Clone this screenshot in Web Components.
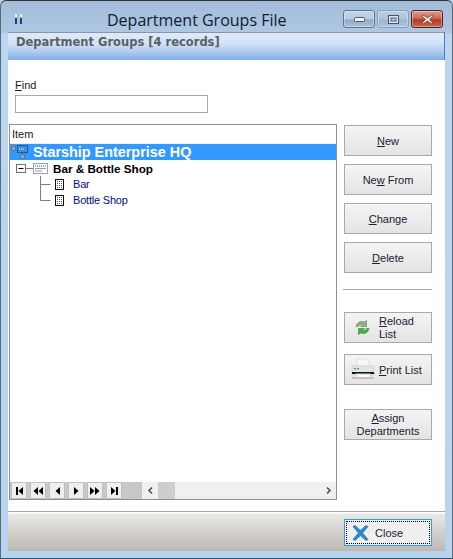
<!DOCTYPE html>
<html>
<head>
<meta charset="utf-8">
<title>Department Groups File</title>
<style>
    html, body { margin: 0; padding: 0; background: #b9d4ee; }
    body { font-family: "DejaVu Sans", sans-serif; font-size: 10px; }
    u { text-underline-offset: 1px; }
</style>
</head>
<body>

<app-window>
    <title-bar slot="title" label="Department Groups File"></title-bar>
    <band-header slot="band">Department Groups [4 records]</band-header>

    <find-box slot="left"></find-box>
    <tree-list slot="left">
        <tree-row kind="root" selected label="Starship Enterprise HQ"></tree-row>
        <tree-row kind="group" label="Bar &amp; Bottle Shop"></tree-row>
        <tree-row kind="leaf" label="Bar"></tree-row>
        <tree-row kind="leaf-last" label="Bottle Shop"></tree-row>
    </tree-list>

    <side-buttons slot="right"></side-buttons>

    <foot-bar slot="foot"></foot-bar>
</app-window>

<script>
class AppWindow extends HTMLElement {
    constructor() {
        super();
        this.attachShadow({ mode: 'open' });
        this.shadowRoot.innerHTML = `
            <style>
                :host {
                    display: flex;
                    flex-direction: column;
                    width: 453px;
                    height: 559px;
                    box-sizing: border-box;
                    overflow: hidden;
                    border: 1px solid #5a6a78;
                    border-top-color: #2c3238;
                    border-bottom-color: #1f5a6c;
                    border-radius: 6px 6px 0 0;
                    background: linear-gradient(180deg, #a3bcd8 0, #aec7e2 32px, #bad6f0 33px, #b7d3ee 100%);
                }
                .client {
                    flex: 1;
                    display: flex;
                    flex-direction: column;
                    margin: 0 7px 7px 7px;
                    background: #fff;
                    min-height: 0;
                }
                .main {
                    flex: 1;
                    display: flex;
                    min-height: 0;
                    padding: 0 13px 11px 1px;
                    gap: 7px;
                }
                .left { flex: 0 0 328px; display: flex; flex-direction: column; min-width: 0; }
                .right { flex: 0 0 88px; }
            </style>
            <slot name="title"></slot>
            <div class="client">
                <slot name="band"></slot>
                <div class="main">
                    <div class="left"><slot name="left"></slot></div>
                    <div class="right"><slot name="right"></slot></div>
                </div>
                <slot name="foot"></slot>
            </div>
        `;
    }
}
customElements.define('app-window', AppWindow);

class TitleBar extends HTMLElement {
    constructor() {
        super();
        this.attachShadow({ mode: 'open' });
    }
    connectedCallback() {
        const label = this.getAttribute('label');
        this.shadowRoot.innerHTML = `
            <style>
                :host {
                    display: flex;
                    align-items: flex-start;
                    height: 31px;
                    flex: none;
                    font-family: "Open Sans", sans-serif;
                    font-size: 16px;
                    color: #10202e;
                    position: relative;
                }
                .icon { margin: 12px 0 0 12px; width: 12px; height: 12px; }
                .text { position: absolute; left: 106px; top: 9px; line-height: 21px; white-space: nowrap; }
                .caps { margin: 9px 9px 0 auto; display: flex; gap: 2px; }
                .cap {
                    width: 30px; height: 16px;
                    border: 1px solid #5f7690;
                    border-radius: 3px;
                    display: flex; align-items: center; justify-content: center;
                    background: linear-gradient(180deg, #c3d5e8 0, #b6cbe1 50%, #8ea9c5 55%, #a9c2da 100%);
                    box-shadow: inset 0 0 0 1px rgba(255,255,255,.35);
                }
                .cap.max { border-color: #84a0bc; background: linear-gradient(180deg, #b9cde2 0, #adc5dc 50%, #9bb6d0 55%, #aac3db 100%); }
                .cap.close {
                    border-color: #5a2020;
                    background: linear-gradient(180deg, #d9a096 0, #cc6a58 45%, #b43a22 55%, #c8664c 100%);
                }
            </style>
            <svg class="icon" viewBox="0 0 12 12">
                <rect x="2" y="1" width="2" height="3" fill="#e8f0f8"/><rect x="7" y="1" width="2" height="3" fill="#e8f0f8"/>
                <rect x="2" y="5" width="2" height="6" fill="#1f3f80"/><rect x="7" y="5" width="2" height="6" fill="#1f3f80"/>
            </svg>
            <div class="text">${label}</div>
            <div class="caps">
                <div class="cap">
                    <svg width="11" height="5" viewBox="0 0 11 5"><rect x=".5" y=".5" width="10" height="4" rx="1" fill="#f0f3f6" stroke="#47566a"/></svg>
                </div>
                <div class="cap max">
                    <svg width="11" height="9" viewBox="0 0 11 9"><rect x=".5" y=".5" width="10" height="8" fill="none" stroke="#47566a"/><rect x="1.500" y="1.500" width="8" height="6" fill="none" stroke="#dfe8f0"/><rect x="3" y="3" width="5" height="3" fill="#a8c0d8" stroke="#47566a" stroke-width=".6"/></svg>
                </div>
                <div class="cap close">
                    <svg width="13" height="11" viewBox="0 0 13 11"><path d="M2 1 L6.5 4 L11 1 L12 2 L8.5 5.5 L12 9 L11 10 L6.5 7 L2 10 L1 9 L4.5 5.5 L1 2 Z" fill="#f4f4f4" stroke="#6a3028" stroke-width=".7"/></svg>
                </div>
            </div>
        `;
    }
}
customElements.define('title-bar', TitleBar);

class BandHeader extends HTMLElement {
    constructor() {
        super();
        this.attachShadow({ mode: 'open' });
        this.shadowRoot.innerHTML = `
            <style>
                :host {
                    display: block;
                    flex: none;
                    height: 28px;
                    box-sizing: border-box;
                    border-top: 1px solid #8c949c;
                    border-right: 1px solid #4a78c8;
                    background: linear-gradient(180deg, #dde9fb 0, #d4e4f9 35%, #b5cff0 65%, #84ade4 100%);
                    font-family: "DejaVu Sans", sans-serif;
                    font-weight: bold;
                    font-size: 11.5px;
                    color: #5a5f60;
                    padding: 2px 0 0 8px;
                    line-height: 15px;
                    white-space: nowrap;
                }
            </style>
            <slot></slot>
        `;
    }
}
customElements.define('band-header', BandHeader);

class FindBox extends HTMLElement {
    constructor() {
        super();
        this.attachShadow({ mode: 'open' });
        this.shadowRoot.innerHTML = `
            <style>
                :host {
                    display: block;
                    flex: none;
                    height: 36px;
                    margin-top: 18px;
                    padding-left: 6px;
                    font-family: "Liberation Sans", sans-serif;
                    font-size: 11px;
                    color: #1a1a1a;
                }
                label { display: block; line-height: 14px; height: 14px; }
                .input {
                    width: 193px;
                    height: 18px;
                    margin-top: 3px;
                    box-sizing: border-box;
                    border: 1px solid #a9a9a9;
                    background: #fff;
                }
            </style>
            <label><u>F</u>ind</label>
            <div class="input"></div>
        `;
    }
}
customElements.define('find-box', FindBox);

class TreeList extends HTMLElement {
    constructor() {
        super();
        this.attachShadow({ mode: 'open' });
        this.shadowRoot.innerHTML = `
            <style>
                :host {
                    display: flex;
                    flex-direction: column;
                    flex: 1;
                    min-height: 0;
                    margin-top: 10px;
                    box-sizing: border-box;
                    border: 1px solid #8f8f8f;
                    font-family: "Liberation Sans", sans-serif;
                    font-size: 11px;
                }
                .head {
                    flex: none;
                    height: 19px;
                    line-height: 19px;
                    padding-left: 2px;
                    color: #1a1a1a;
                    box-sizing: border-box;
                    border-bottom: 1px solid #eceff3;
                }
                .rows { flex: 1; min-height: 0; }
                .bottom {
                    flex: none;
                    display: flex;
                    height: 17px;
                    background: #f0f0f0;
                }
                .nav {
                    display: flex;
                    gap: 3px;
                    width: 132px;
                    box-sizing: border-box;
                    padding-left: 1px;
                    background: #c8c8c8;
                }
                .nav div {
                    width: 16px;
                    background: #efefef;
                    box-sizing: border-box;
                    border: 1px solid #c0c0c0;
                    display: flex; align-items: center; justify-content: center;
                }
                .arrow { width: 16px; display: flex; align-items: center; justify-content: center; }
                .thumb { width: 17px; background: #cdcdcd; }
                .track { flex: 1; }
            </style>
            <div class="head">Item</div>
            <div class="rows"><slot></slot></div>
            <div class="bottom">
                <div class="nav">
                    <div><svg width="9" height="8" viewBox="0 0 9 8"><path d="M1 0h2v8H1zM8 0v8L3.500 4z" fill="#000"/></svg></div>
                    <div><svg width="10" height="8" viewBox="0 0 10 8"><path d="M5 0v8L.5 4zM10 0v8L5.500 4z" fill="#000"/></svg></div>
                    <div><svg width="5" height="8" viewBox="0 0 5 8"><path d="M5 0v8L.5 4z" fill="#000"/></svg></div>
                    <div><svg width="5" height="8" viewBox="0 0 5 8"><path d="M0 0v8l4.500-4z" fill="#000"/></svg></div>
                    <div><svg width="10" height="8" viewBox="0 0 10 8"><path d="M0 0v8l4.500-4zM5 0v8l4.500-4z" fill="#000"/></svg></div>
                    <div><svg width="9" height="8" viewBox="0 0 9 8"><path d="M1 0v8l4.500-4zM6 0h2v8H6z" fill="#000"/></svg></div>
                </div>
                <div class="arrow"><svg width="7" height="7" viewBox="0 0 7 7"><path d="M5 .5 2 3.5l3 3" fill="none" stroke="#505050" stroke-width="1.6"/></svg></div>
                <div class="thumb"></div>
                <div class="track"></div>
                <div class="arrow"><svg width="7" height="7" viewBox="0 0 7 7"><path d="M2 .5l3 3-3 3" fill="none" stroke="#505050" stroke-width="1.6"/></svg></div>
            </div>
        `;
    }
}
customElements.define('tree-list', TreeList);

const LEAF_ICON = `
    <rect x="45.500" y="3.500" width="8" height="10" fill="#fff" stroke="#101010"/>
    <path d="M47 5.500h5M47 7.500h5M47 9.500h5M47 11.500h5" stroke="#505050" stroke-dasharray="1 1"/>`;

const TREE_GLYPHS = {
    root: `<svg width="23" height="16" viewBox="0 0 23 16">
            <rect x="1.500" y="2.500" width="4" height="4" fill="#8ca4b8" stroke="#5a7a94"/>
            <path d="M6 5h2M12.500 9v2" stroke="#5a7a94"/>
            <rect x="7.500" y="1.500" width="10" height="7" fill="#3a8fe0" stroke="#1a5aa0"/>
            <path d="M9 5h1M11 5h1M13 5h1" stroke="#fff"/>
            <rect x="10.500" y="10.500" width="4" height="4" fill="#8ca4b8" stroke="#5a7a94"/>
           </svg>`,
    group: `<svg width="43" height="16" viewBox="0 0 43 16">
            <rect x="6.500" y="4.500" width="9" height="8" fill="#fff" stroke="#707070"/>
            <path d="M8.500 8.500h5" stroke="#000"/>
            <path d="M16 8.500h7" stroke="#808080"/>
            <rect x="23.500" y="3.500" width="14" height="10" fill="#fff" stroke="#a0a0ac"/>
            <path d="M25 6h11" stroke="#3040a0" stroke-dasharray="1 1"/>
            <path d="M25 8.500h11M25 11h7" stroke="#9098c8"/>
           </svg>`,
    leaf: `<svg width="63" height="16" viewBox="0 0 63 16">
            <path d="M30.500 0v16M30.500 8.500h10" fill="none" stroke="#808080"/>
            ${LEAF_ICON}
           </svg>`,
    'leaf-last': `<svg width="63" height="16" viewBox="0 0 63 16">
            <path d="M30.500 0v8.500h10" fill="none" stroke="#808080"/>
            ${LEAF_ICON}
           </svg>`
};

class TreeRow extends HTMLElement {
    constructor() {
        super();
        this.attachShadow({ mode: 'open' });
    }
    connectedCallback() {
        const kind = this.getAttribute('kind');
        const label = this.getAttribute('label');
        const selected = this.hasAttribute('selected');
        const textStyle = {
            root: 'font:bold 14.4px "Liberation Sans",sans-serif;color:#fff;',
            group: 'font:bold 11.7px "Liberation Sans",sans-serif;color:#000;',
            leaf: 'color:#00107a;letter-spacing:-.2px;',
            'leaf-last': 'color:#00107a;letter-spacing:-.2px;'
        }[kind];
        this.shadowRoot.innerHTML = `
            <style>
                :host {
                    display: block;
                    height: 16px;
                    line-height: 16px;
                    white-space: nowrap;
                }
                .row { display: flex; align-items: center; height: 16px; background: ${selected ? '#3399ff' : 'transparent'}; }
                svg { flex: none; display: block; }
                .text { ${textStyle} }
            </style>
            <div class="row">${TREE_GLYPHS[kind]}<span class="text">${label}</span></div>
        `;
    }
}
customElements.define('tree-row', TreeRow);

class FlatButton extends HTMLElement {
    constructor() {
        super();
        this.attachShadow({ mode: 'open' });
        this.shadowRoot.innerHTML = `
            <style>
                :host {
                    display: flex;
                    align-items: center;
                    justify-content: center;
                    box-sizing: border-box;
                    width: 88px;
                    height: 31px;
                    padding-top: 1px;
                    border: 1px solid #a9a9a9;
                    background: linear-gradient(180deg, #f4f4f4 0, #ececec 50%, #e4e4e4 100%);
                    font-family: "Liberation Sans", sans-serif;
                    font-size: 11px;
                    line-height: 13px;
                    color: #1a2230;
                    text-align: center;
                }
                :host([iconed]) { justify-content: flex-start; text-align: left; padding-top: 0; }
                u { text-underline-offset: 1px; }
            </style>
            <slot></slot>
        `;
    }
}
customElements.define('flat-button', FlatButton);

class SideButtons extends HTMLElement {
    constructor() {
        super();
        this.attachShadow({ mode: 'open' });
        this.shadowRoot.innerHTML = `
            <style>
                :host { display: flex; flex-direction: column; padding-top: 65px; }
                .stack { display: flex; flex-direction: column; gap: 8px; }
                hr { border: 0; height: 1px; background: #a8a8a8; margin: 16px 0 22px -1px; width: 89px; }
                .lower { display: flex; flex-direction: column; gap: 11px; }
                .assign { margin-top: 24px; }
                .ico { flex: none; display: block; }
                .print { padding-top: 2px; }
            </style>
            <div class="stack">
                <flat-button><span><u>N</u>ew</span></flat-button>
                <flat-button><span>Ne<u>w</u> From</span></flat-button>
                <flat-button><span><u>C</u>hange</span></flat-button>
                <flat-button><span><u>D</u>elete</span></flat-button>
            </div>
            <hr>
            <div class="lower">
                <flat-button iconed>
                    <svg class="ico" style="margin-left:9px;margin-right:8px" width="17" height="17" viewBox="0 0 17 17">
                        <path d="M2 7.500C2.500 3.500 7 1.500 10.500 3L12.500 1.500V7.500H6.500L8.500 5.800C7 5 5 5.800 4.500 7.500Z" fill="#8fae8a" stroke="#5f8a5c" stroke-width=".6"/>
                        <path d="M15 9.500C14.500 13.500 10 15.500 6.500 14L4.500 15.500V9.500H10.500L8.500 11.200C10 12 12 11.200 12.500 9.500Z" fill="#47b04a" stroke="#2e8a30" stroke-width=".6"/>
                    </svg>
                    <span><u>R</u>eload<br>List</span>
                </flat-button>
                <flat-button iconed>
                    <svg class="ico" style="margin-left:6px;margin-right:4px" width="24" height="24" viewBox="0 0 24 24">
                        <rect x="6" y="1" width="12" height="8" fill="#f6f6f6" stroke="#e2e2e2"/>
                        <rect x="1" y="8" width="22" height="9" rx="1" fill="#e4e4e4" stroke="#d2d2d2"/>
                        <rect x="3" y="10" width="2" height="1.500" fill="#3fb04a"/><rect x="6" y="10" width="2" height="1.500" fill="#3fb04a"/>
                        <rect x="1" y="14" width="22" height="2" fill="#141414"/>
                        <rect x="5" y="16" width="14" height="4" fill="#fcfcfc" stroke="#d8d8d8"/>
                        <rect x="1" y="19" width="22" height="2" fill="#c2c2c2"/>
                    </svg>
                    <span class="print"><u>P</u>rint List</span>
                </flat-button>
            </div>
            <flat-button class="assign"><span><u>A</u>ssign<br>Departments</span></flat-button>
        `;
    }
}
customElements.define('side-buttons', SideButtons);

class FootBar extends HTMLElement {
    constructor() {
        super();
        this.attachShadow({ mode: 'open' });
        this.shadowRoot.innerHTML = `
            <style>
                :host {
                    display: flex;
                    justify-content: flex-end;
                    flex: none;
                    height: 40px;
                    box-sizing: border-box;
                    border-top: 1px solid #a8a8a8;
                    background: linear-gradient(180deg, #fff 0, #fff 1px, #e8e8e6 2px, #bdb8b2 100%);
                    padding: 7px 13px 0 0;
                }
                .close {
                    width: 88px;
                    height: 27px;
                    box-sizing: border-box;
                    border: 1px solid #3399ff;
                    background: #efefef;
                    padding: 1px;
                    font-family: "Liberation Sans", sans-serif;
                    font-size: 11px;
                    color: #1a2230;
                }
                .inner {
                    height: 100%;
                    box-sizing: border-box;
                    border: 1px dotted #000;
                    display: flex;
                    align-items: center;
                    padding-left: 5px;
                    gap: 6px;
                }
                svg { display: block; }
            </style>
            <div class="close">
                <div class="inner">
                    <svg width="17" height="16" viewBox="0 0 17 16"><path d="M0.500 1.500 3 0 8.500 5 14 0 16.500 1.500 11 8 16.500 14.500 14 16 8.500 11 3 16 0.500 14.500 6 8Z" fill="#2f87c8"/></svg>
                    <span>Close</span>
                </div>
            </div>
        `;
    }
}
customElements.define('foot-bar', FootBar);
</script>
</body>
</html>
